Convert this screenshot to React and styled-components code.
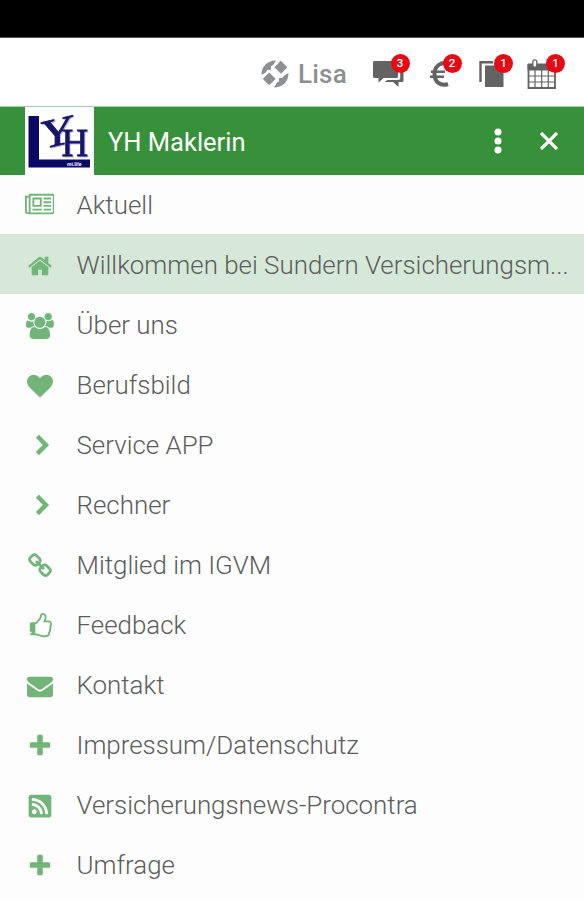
import React from 'react'
import styled, { createGlobalStyle } from 'styled-components'
import { FaRssSquare } from 'react-icons/fa'

const GlobalStyle = createGlobalStyle`
  * {
    box-sizing: border-box;
  }
  body {
    margin: 0;
    background-color: #fdfdfd;
    font-family: Roboto, "Liberation Sans", sans-serif;
  }
`;

const Screen = styled.div`
  width: 584px;
  height: 900px;
  overflow: hidden;
  display: flex;
  flex-direction: column;
`;

const StatusBar = styled.div`
  flex: none;
  height: 38px;
  background-color: #000;
  border-bottom: 1px solid #555;
`;

const TopBar = styled.header`
  flex: none;
  height: 69px;
  padding: 0 27px 0 261px;
  display: flex;
  align-items: center;
  background-color: #fff;
  border-bottom: 1px solid #a5cba7;
`;

const User = styled.div`
  display: flex;
  align-items: center;
  gap: 9px;
  width: 112px;
  padding-top: 3px;
  color: #8d8f90;
  font-size: 26px;
  font-weight: 500;
  letter-spacing: 0.2px;
`;

const Shortcuts = styled.nav`
  flex: 1;
  display: flex;
`;

const Shortcut = styled.a`
  position: relative;
  flex: none;
  width: ${({ $width }) => $width}px;
  height: 34px;
  color: #636363;
  svg {
    display: block;
  }
`;

const Badge = styled.span`
  position: absolute;
  top: -1px;
  left: ${({ $left }) => $left}px;
  width: 19px;
  height: 19px;
  border-radius: 50%;
  background-color: #e60a14;
  color: #fff;
  font-size: 11.5px;
  font-weight: 500;
  line-height: 19px;
  text-align: center;
`;

const Header = styled.div`
  flex: none;
  height: 68px;
  padding: 0 26px 0 25px;
  display: flex;
  align-items: center;
  background-color: #36913a;
  color: #fff;
`;

const Title = styled.h1`
  flex: 1;
  margin: 0 0 0 14px;
  padding-top: 2px;
  font-size: 25.5px;
  font-weight: 400;
`;

const Actions = styled.div`
  display: flex;
  align-items: center;
  gap: 38px;
`;

const Menu = styled.ul`
  margin: 0;
  padding: 0;
  list-style: none;
`;

const Item = styled.li`
  display: flex;
  align-items: center;
  height: 60px;
  padding: 2px 14px 0 20px;
  background-color: ${({ $active }) => ($active ? '#d6e9d8' : 'transparent')};
  &:first-child {
    height: 59px;
    padding-top: 0;
  }
`;

const ItemIcon = styled.span`
  flex: none;
  width: 39px;
  margin-right: 17.5px;
  padding-top: 1px;
  display: flex;
  justify-content: center;
  color: #71b678;
`;

const Label = styled.span`
  white-space: nowrap;
  color: #5c5c5c;
  font-size: 25.9px;
  font-weight: 300;
  line-height: 36px;
`;

// glyphs on the 1792 unit grid, 26px per em
const Glyph = ({ d, wide }) => (
  <svg width={wide ? 29.7 : 26} height="26" viewBox={wide ? '0 0 2048 1792' : '0 0 1792 1792'} fill="currentColor">
    <path d={d} />
  </svg>
)

const Chevron = () => (
  <svg width="26" height="26" viewBox="0 0 26 26" fill="none" stroke="currentColor" strokeWidth="4.4">
    <path d="M10.400 3.200l8.600 8.700-8.600 8.700" />
  </svg>
)

const glyphs = {
  news: 'M1024 512h-384v384h384v-384zm128 640v128h-640v-128h640zm0-768v640h-640v-640h640zm640 768v128h-512v-128h512zm0-256v128h-512v-128h512zm0-256v128h-512v-128h512zm0-256v128h-512v-128h512zm-1536 960v-960h-128v960q0 26 19 45t45 19 45-19 19-45zm1664 0v-1088h-1536v1088q0 33-11 64h1483q26 0 45-19t19-45zm128-1216v1216q0 80-56 136t-136 56h-1664q-80 0-136-56t-56-136v-1088h256v-128h1792z',
  home: 'M1472 992v480q0 26-19 45t-45 19h-384v-384h-256v384h-384q-26 0-45-19t-19-45v-480q0-1 .5-3t.5-3l575-474 575 474q1 2 1 6zm223-69l-62 74q-8 9-21 11h-3q-13 0-21-7l-692-577-692 577q-12 8-24 7-13-2-21-11l-62-74q-8-10-7-23.5t11-21.5l719-599q32-26 76-26t76 26l244 204v-195q0-14 9-23t23-9h192q14 0 23 9t9 23v408l219 182q10 8 11 21.5t-7 23.5z',
  users: 'M657 896q-162 5-265 128h-134q-82 0-138-40.5t-56-118.5q0-353 124-353 6 0 43.5 21t97.5 42.5 119 21.5q67 0 133-23-5 37-5 66 0 159 93 290zm1071 637q0 120-73 189.5t-194 69.5h-874q-121 0-194-69.5t-73-189.5q0-53 3.5-103.5t14-109 26.5-108.5 43-97.5 62-81 85.5-53.5 111.5-20q10 0 43 21.5t73 48 107 48 135 21.5 135-21.5 107-48 73-48 43-21.5q61 0 111.5 20t85.5 53.5 62 81 43 97.5 26.5 108.5 14 109 3.5 103.5zm-1024-1277q0 106-75 181t-181 75-181-75-75-181 75-181 181-75 181 75 75 181zm704 384q0 159-112.5 271.5t-271.5 112.5-271.5-112.5-112.5-271.5 112.5-271.5 271.5-112.5 271.5 112.5 112.5 271.5zm576 225q0 78-56 118.5t-138 40.5h-134q-103-123-265-128 93-131 93-290 0-29-5-66 66 23 133 23 59 0 119-21.5t97.5-42.5 43.5-21q124 0 124 353zm-128-609q0 106-75 181t-181 75-181-75-75-181 75-181 181-75 181 75 75 181z',
  heart: 'M896 1664q-26 0-44-18l-624-602q-10-8-27.5-26t-55.5-65.5-68-97.5-53.5-121-23.5-138q0-220 127-344t351-124q62 0 126.5 21.5t120 58 95.5 68.5 76 68q36-36 76-68t95.5-68.5 120-58 126.5-21.5q224 0 351 124t127 344q0 221-229 450l-623 600q-18 18-44 18z',
  link: 'M1520 1216q0-40-28-68l-208-208q-28-28-68-28-42 0-72 32 3 3 19 18.5t21.5 21.5 15 19 13 25.5 3.5 27.5q0 40-28 68t-68 28q-15 0-27.5-3.5t-25.5-13-19-15-21.5-21.5-18.5-19q-33 31-33 73 0 40 28 68l206 207q27 27 68 27 40 0 68-26l147-146q28-28 28-67zm-703-705q0-40-28-68l-206-207q-28-28-68-28-39 0-68 27l-147 146q-28 28-28 67 0 40 28 68l208 208q27 27 68 27 42 0 72-31-3-3-19-18.5t-21.5-21.5-15-19-13-25.5-3.5-27.5q0-40 28-68t68-28q15 0 27.5 3.5t25.5 13 19 15 21.5 21.5 18.5 19q33-31 33-73zm895 705q0 120-85 203l-147 146q-83 83-203 83-121 0-204-85l-206-207q-83-83-83-203 0-123 88-209l-88-88q-86 88-208 88-120 0-204-84l-208-208q-84-84-84-204t85-203l147-146q83-83 203-83 121 0 204 85l206 207q83 83 83 203 0 123-88 209l88 88q86-88 208-88 120 0 204 84l208 208q84 84 84 204z',
  thumb: 'M320 1344q0-26-19-45t-45-19q-27 0-45.5 19t-18.5 45q0 27 18.5 45.5t45.5 18.5q26 0 45-18.5t19-45.5zm1280-576q0-51-39-89.5t-89-38.5h-352q0-58 48-159.5t48-160.5q0-98-32-145t-128-47q-26 26-38 85t-30.5 125.5-59.5 109.5q-22 23-77 91-4 5-23 30t-31.5 41-34.5 42.5-40 44-38.5 35.5-40 27-35.5 9h-32v640h32q13 0 31.5 3t33 6.5 38 11 35 11.5 35.5 12.5 29 10.5q211 73 342 73h121q192 0 192-167 0-26-5-56 30-16 47.5-52.5t17.5-73.5-18-69q53-50 53-119 0-25-10-55.5t-25-47.5q32-1 53.5-47t21.5-81zm128-1q0 89-49 163 9 33 9 69 0 77-38 144 3 21 3 43 0 101-60 178 1 139-85 219.5t-227 80.5h-129q-96 0-189.5-22.5t-216.5-65.5q-116-40-138-40h-288q-53 0-90.5-37.5t-37.5-90.5v-640q0-53 37.5-90.5t90.5-37.5h274q36-24 137-155 58-75 107-128 24-25 35.5-85.5t30.5-126.5 62-108q39-37 90-37 84 0 151 32.5t102 101.5 35 186q0 93-48 192h176q104 0 180 76t76 179z',
  mail: 'M1792 710v794q0 66-47 113t-113 47h-1472q-66 0-113-47t-47-113v-794q44 49 101 87 362 246 497 345 57 42 92.5 65.5t94.5 48 110 24.5h2q51 0 110-24.5t94.5-48 92.5-65.5q170-123 498-345 57-39 100-87zm0-294q0 79-49 151t-122 123q-376 261-468 325-10 7-42.5 31t-54 38.5-52 32.5-57.5 27-50 9h-2q-23 0-50-9t-57.5-27-52-32.5-54-38.5-42.5-31q-91-64-262-182.5t-205-142.5q-62-42-117-115.5t-55-136.5q0-78 41.5-130t118.5-52h1472q65 0 112.5 47t47.5 113z',
  plus: 'M1600 736v192q0 40-28 68t-68 28h-416v416q0 40-28 68t-68 28h-192q-40 0-68-28t-28-68v-416h-416q-40 0-68-28t-28-68v-192q0-40 28-68t68-28h416v-416q0-40 28-68t68-28h192q40 0 68 28t28 68v416h416q40 0 68 28t28 68z',
};

const items = [
  { label: 'Aktuell', icon: <Glyph d={glyphs.news} wide /> },
  { label: 'Willkommen bei Sundern Versicherungsm...', icon: <Glyph d={glyphs.home} />, active: true },
  { label: 'Über uns', icon: <Glyph d={glyphs.users} wide /> },
  { label: 'Berufsbild', icon: <Glyph d={glyphs.heart} /> },
  { label: 'Service APP', icon: <Chevron /> },
  { label: 'Rechner', icon: <Chevron /> },
  { label: 'Mitglied im IGVM', icon: <Glyph d={glyphs.link} /> },
  { label: 'Feedback', icon: <Glyph d={glyphs.thumb} /> },
  { label: 'Kontakt', icon: <Glyph d={glyphs.mail} /> },
  { label: 'Impressum/Datenschutz', icon: <Glyph d={glyphs.plus} /> },
  { label: 'Versicherungsnews-Procontra', icon: <FaRssSquare size={26} /> },
  { label: 'Umfrage', icon: <Glyph d={glyphs.plus} /> },
];

const UserLogo = () => (
  <svg width="28" height="28" viewBox="0 0 28 28" fill="currentColor">
    <path d="M.6 15A13.4 13.4 0 0 1 15 .6L12.200 5 10 6.200 9.800 9.800 6.200 10 5 12.200z" />
    <path d="M19.800.8l6.500 6.400-6.300 6.500-6.600-6.400z" />
    <path d="M8.200 12.400l6.500 6.400-6.400 6.500-6.500-6.200z" />
    <path d="M27.400 13A13.400 13.400 0 0 1 13 27.400L16 22.600 18 21.600 18 18 21.600 17.800 23 15.800z" />
  </svg>
)

const ChatIcon = () => (
  <svg width="31" height="34" viewBox="0 0 31 34" fill="currentColor">
    <path d="M1.500 6h22a1.500 1.500 0 0 1 1.500 1.500v14a1.500 1.500 0 0 1-1.500 1.500H10.500l-5 4.500V23H1.500a1.500 1.500 0 0 1-1.500-1.500v-14A1.500 1.500 0 0 1 1.500 6z" />
    <path d="M27.200 11h1.800a1.500 1.500 0 0 1 1.500 1.500V25.500a1.500 1.500 0 0 1-1.500 1.500h-3.500V32l-5.500-5h-8.500l3-2H25.200a2 2 0 0 0 2-2z" />
  </svg>
)

const EuroIcon = () => (
  <svg width="22" height="34" viewBox="0 0 22 34" fill="none" stroke="currentColor">
    <path d="M19 8.500C12 6.500 5.500 11 5.500 19s6 12.500 13.500 10" strokeWidth="4" />
    <path d="M2 16.700h14M1 21.700h14" strokeWidth="2.400" />
  </svg>
)

const CopyIcon = () => (
  <svg width="26" height="34" viewBox="0 0 26 34">
    <path d="M2.500 27V7.200H15" fill="none" stroke="currentColor" strokeWidth="2.400" />
    <rect x="7" y="10.500" width="18.500" height="21.500" fill="currentColor" />
  </svg>
)

const CalendarIcon = () => (
  <svg width="30" height="35" viewBox="0 0 30 35" fill="none" stroke="currentColor">
    <path d="M1 9h28v6H1z" fill="currentColor" strokeWidth="1" />
    <path d="M1.500 9v24h26.500V9" strokeWidth="1.800" />
    <path d="M8 15v18M14.700 15v18M21.300 15v18M1 21h27M1 27h27" strokeWidth="1.200" />
    <rect x="5.800" y="4.800" width="4" height="7.500" rx="2" fill="#fff" strokeWidth="1.300" />
  </svg>
)

const shortcuts = [
  { icon: <ChatIcon />, count: 3, width: 56, left: 17.5 },
  { icon: <EuroIcon />, count: 2, width: 49, left: 13.5 },
  { icon: <CopyIcon />, count: 1, width: 49, left: 16 },
  { icon: <CalendarIcon />, count: 1, width: 30, left: 19 },
];

const LogoLetters = styled.g`
  font-family: "Liberation Serif", serif;
  font-size: 41px;
  fill: #17146a;
  stroke: #17146a;
  stroke-width: 0.8px;
  filter: drop-shadow(1px 1px 0 #b9b6dc);
`;

// the Y leans upward to the right, the H sits lower in front of it
const Logo = () => (
  <svg width="69" height="68" viewBox="0 0 69 68">
    <rect width="69" height="68" fill="#fff" />
    <path d="M3.500 9h10.500v43.500h51v8H3.500z" fill="#0a0765" />
    <LogoLetters>
      <text transform="matrix(1.13 -.26 0 1 15.500 42.500)">Y</text>
      <text transform="translate(36.500 49) scale(.9 1)">H</text>
    </LogoLetters>
    <text x="42" y="58.500" fontFamily="Liberation Sans, sans-serif" fontWeight="bold" fontSize="5" fill="#fff">mi.life</text>
  </svg>
)

const App = () => {
  return (
    <Screen>
      <GlobalStyle />
      <StatusBar />
      <TopBar>
        <User>
          <UserLogo />
          Lisa
        </User>
        <Shortcuts>
          {shortcuts.map(({ icon, count, width, left }) => (
            <Shortcut key={left} $width={width}>
              {icon}
              <Badge $left={left}>{count}</Badge>
            </Shortcut>
          ))}
        </Shortcuts>
      </TopBar>
      <Header>
        <Logo />
        <Title>YH Maklerin</Title>
        <Actions>
          <svg width="8" height="26" viewBox="0 0 8 26" fill="currentColor">
            <circle cx="4" cy="4" r="3.5" />
            <circle cx="4" cy="13" r="3.5" />
            <circle cx="4" cy="22" r="3.5" />
          </svg>
          <svg width="18" height="18" viewBox="0 0 18 18" stroke="currentColor" strokeWidth="3.2">
            <path d="M1 1l16 16M17 1L1 17" />
          </svg>
        </Actions>
      </Header>
      <Menu>
        {items.map(({ label, icon, active }) => (
          <Item key={label} $active={active}>
            <ItemIcon>{icon}</ItemIcon>
            <Label>{label}</Label>
          </Item>
        ))}
      </Menu>
    </Screen>
  )
}

export default App
